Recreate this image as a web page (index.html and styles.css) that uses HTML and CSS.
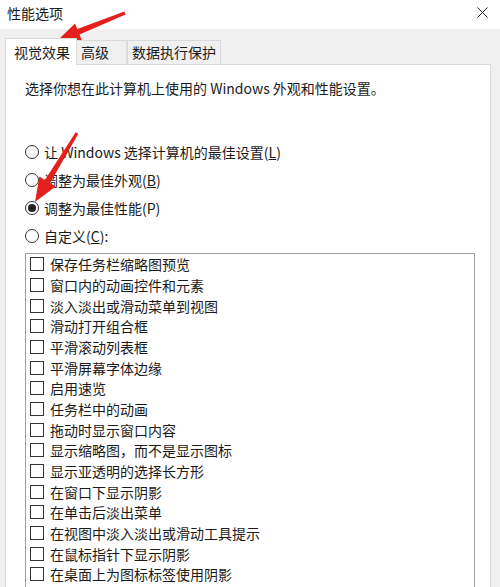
FILE: index.html
```html
<!DOCTYPE html>
<html lang="zh-CN">
<head>
<meta charset="utf-8">
<title>性能选项</title>
<link rel="stylesheet" href="styles.css">
</head>
<body>
<div class="titlebar">
  <span class="title">性能选项</span>
  <svg class="close" width="11" height="11" viewBox="0 0 11 11"><path d="M0.5 0.5 L10.5 10.5 M10.5 0.5 L0.5 10.5" stroke="#222" stroke-width="1" fill="none"/></svg>
</div>
<div class="body">
  <div class="tabs">
    <div class="tab tab-active tab-visual">视觉效果</div>
    <div class="tab tab-adv">高级</div>
    <div class="tab tab-dep">数据执行保护</div>
  </div>
  <div class="panel">
    <p class="desc">选择你想在此计算机上使用的 Windows 外观和性能设置。</p>
    <div class="options">
      <div class="option"><span class="radio"></span><span>让 Windows 选择计算机的最佳设置(<u>L</u>)</span></div>
      <div class="option"><span class="radio"></span><span>调整为最佳外观(<u>B</u>)</span></div>
      <div class="option"><span class="radio radio-checked"></span><span>调整为最佳性能(P)</span></div>
      <div class="option"><span class="radio"></span><span>自定义(<u>C</u>):</span></div>
    </div>
    <div class="listbox">
      <div class="item"><span class="check"></span><span>保存任务栏缩略图预览</span></div>
      <div class="item"><span class="check"></span><span>窗口内的动画控件和元素</span></div>
      <div class="item"><span class="check"></span><span>淡入淡出或滑动菜单到视图</span></div>
      <div class="item"><span class="check"></span><span>滑动打开组合框</span></div>
      <div class="item"><span class="check"></span><span>平滑滚动列表框</span></div>
      <div class="item"><span class="check"></span><span>平滑屏幕字体边缘</span></div>
      <div class="item"><span class="check"></span><span>启用速览</span></div>
      <div class="item"><span class="check"></span><span>任务栏中的动画</span></div>
      <div class="item"><span class="check"></span><span>拖动时显示窗口内容</span></div>
      <div class="item"><span class="check"></span><span>显示缩略图，而不是显示图标</span></div>
      <div class="item"><span class="check"></span><span>显示亚透明的选择长方形</span></div>
      <div class="item"><span class="check"></span><span>在窗口下显示阴影</span></div>
      <div class="item"><span class="check"></span><span>在单击后淡出菜单</span></div>
      <div class="item"><span class="check"></span><span>在视图中淡入淡出或滑动工具提示</span></div>
      <div class="item"><span class="check"></span><span>在鼠标指针下显示阴影</span></div>
      <div class="item"><span class="check"></span><span>在桌面上为图标标签使用阴影</span></div>
    </div>
  </div>
</div>
<svg class="annot" width="500" height="587" viewBox="0 0 500 587">
  <polygon fill="#e3201b" points="58,40 75.0,23.4 77.3,29.0 124.4,11.6 125.6,14.4 79.5,34.6 81.8,40.2"/>
  <polygon fill="#e3201b" points="35,202 39.4,176.6 44.9,179.9 75.7,132.2 78.3,133.8 50.1,183.1 55.6,186.4"/>
</svg>
</body>
</html>
```
FILE: styles.css
```css
html, body {
  margin: 0;
  height: 587px;
  overflow: hidden;
}
body {
  background: #f0f0f0;
  font-family: "Noto Sans CJK SC", "Noto Sans", sans-serif;
  font-size: 14px;
  color: #1a1a1a;
  position: relative;
}
.titlebar {
  height: 29px;
  background: #fff;
  display: flex;
  align-items: center;
  justify-content: space-between;
  padding: 0 12px 4px 7px;
  box-sizing: border-box;
}
.title {
  line-height: 18px;
}
.close {
  display: block;
}
.body {
  padding: 9px 9px 0 5px;
}
.tabs {
  display: flex;
  align-items: flex-end;
  height: 27px;
  margin-bottom: -1px;
  position: relative;
  z-index: 1;
}
.tab {
  box-sizing: border-box;
  height: 24px;
  line-height: 23px;
  margin-bottom: 1px;
  border: 1px solid #d9d9d9;
  border-bottom: none;
  background: #f0f0f0;
  padding-left: 4px;
  white-space: nowrap;
}
.tab-active {
  height: 27px;
  line-height: 26px;
  margin-bottom: 0;
  background: #fff;
  padding-left: 8px;
}
.tab-visual { width: 72px; }
.tab-adv { width: 50px; border-left: none; }
.tab-dep { width: 94px; border-left: 1px solid #d9d9d9; }
.panel {
  background: #fff;
  border: 1px solid #d9d9d9;
  border-bottom: none;
  padding: 13px 15px 0 19px;
  height: 600px;
}
.desc {
  margin: 0;
  line-height: 20px;
}
.options {
  margin-top: 40px;
}
.option {
  display: flex;
  align-items: center;
  gap: 5px;
  height: 28px;
}
.radio {
  box-sizing: border-box;
  width: 14px;
  height: 14px;
  border: 1px solid #333;
  border-radius: 50%;
  display: flex;
  align-items: center;
  justify-content: center;
  flex: none;
}
.radio-checked::after {
  content: "";
  width: 8px;
  height: 8px;
  border-radius: 50%;
  background: #222;
}
.listbox {
  margin-top: 3px;
  border: 1px solid #a0a0a0;
  border-bottom: none;
  padding-left: 4px;
  height: 340px;
}
.item {
  display: flex;
  align-items: center;
  gap: 6px;
  height: 20.67px;
  white-space: nowrap;
}
.check {
  box-sizing: border-box;
  width: 14px;
  height: 14px;
  border: 1px solid #333;
  flex: none;
}
.annot {
  position: absolute;
  left: 0;
  top: 0;
  pointer-events: none;
}
```
